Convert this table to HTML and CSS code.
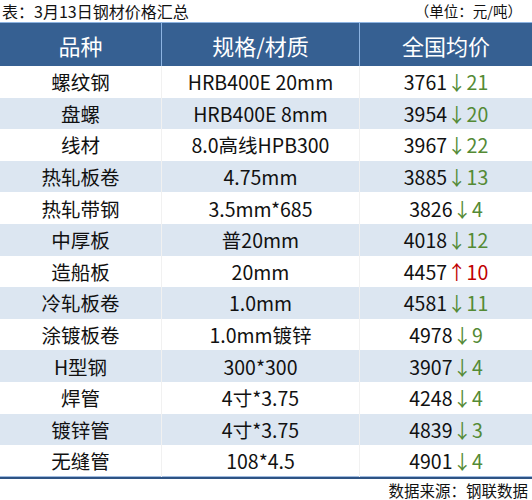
FILE: index.html
```html
<!DOCTYPE html>
<html lang="zh">
<head>
<meta charset="utf-8">
<link rel="stylesheet" href="styles.css">
</head>
<body>
<div class="page">
  <div class="top">
    <span class="title">表：3月13日钢材价格汇总</span>
    <span class="unit">（单位：元/吨）</span>
  </div>
  <div class="table">
    <div class="row head"><div class="c c1">品种</div><div class="c c2">规格/材质</div><div class="c c3">全国均价</div></div>
    <div class="row"><div class="c c1">螺纹钢</div><div class="c c2">HRB400E 20mm</div><div class="c c3">3761<span class="dn">↓21</span></div></div>
    <div class="row alt"><div class="c c1">盘螺</div><div class="c c2">HRB400E 8mm</div><div class="c c3">3954<span class="dn">↓20</span></div></div>
    <div class="row"><div class="c c1">线材</div><div class="c c2">8.0高线HPB300</div><div class="c c3">3967<span class="dn">↓22</span></div></div>
    <div class="row alt"><div class="c c1">热轧板卷</div><div class="c c2">4.75mm</div><div class="c c3">3885<span class="dn">↓13</span></div></div>
    <div class="row"><div class="c c1">热轧带钢</div><div class="c c2">3.5mm*685</div><div class="c c3">3826<span class="dn">↓4</span></div></div>
    <div class="row alt"><div class="c c1">中厚板</div><div class="c c2">普20mm</div><div class="c c3">4018<span class="dn">↓12</span></div></div>
    <div class="row"><div class="c c1">造船板</div><div class="c c2">20mm</div><div class="c c3">4457<span class="up">↑10</span></div></div>
    <div class="row alt"><div class="c c1">冷轧板卷</div><div class="c c2">1.0mm</div><div class="c c3">4581<span class="dn">↓11</span></div></div>
    <div class="row"><div class="c c1">涂镀板卷</div><div class="c c2">1.0mm镀锌</div><div class="c c3">4978<span class="dn">↓9</span></div></div>
    <div class="row alt"><div class="c c1">H型钢</div><div class="c c2">300*300</div><div class="c c3">3907<span class="dn">↓4</span></div></div>
    <div class="row"><div class="c c1">焊管</div><div class="c c2">4寸*3.75</div><div class="c c3">4248<span class="dn">↓4</span></div></div>
    <div class="row alt"><div class="c c1">镀锌管</div><div class="c c2">4寸*3.75</div><div class="c c3">4839<span class="dn">↓3</span></div></div>
    <div class="row last"><div class="c c1">无缝管</div><div class="c c2">108*4.5</div><div class="c c3">4901<span class="dn">↓4</span></div></div>
  </div>
  <div class="foot">数据来源：钢联数据</div>
</div>
</body>
</html>
```
FILE: styles.css
```css
html, body {
  margin: 0;
  padding: 0;
  background: #ffffff;
}
.page {
  width: 532px;
  height: 500px;
  font-family: "Noto Sans CJK SC", "Noto Sans", sans-serif;
  color: #111111;
  overflow: hidden;
}
.top {
  height: 22px;
  display: flex;
  justify-content: space-between;
  align-items: center;
  line-height: 22px;
  padding: 0 10px 0 2px;
}
.title {
  font-size: 16px;
}
.unit {
  font-size: 14.5px;
}
.table {
  display: flex;
  flex-direction: column;
}
.row {
  display: flex;
  height: 31.6px;
  background: #ffffff;
}
.row.alt {
  background: #dce6f1;
}
.row.head {
  height: 44px;
  background: #366092;
  color: #ffffff;
  border-top: 1px solid #8db4e2;
  box-sizing: border-box;
}
.row.last {
  border-bottom: 2px solid #2e5384;
  box-shadow: 0 -1px 0 #9fbbe0 inset;
}
.c {
  display: flex;
  align-items: center;
  justify-content: center;
  font-size: 19.5px;
  box-sizing: border-box;
}
.head .c {
  font-size: 22px;
}
.c1 { width: 162px; border-right: 1px solid #f1f1f1; }
.c2 { width: 198px; border-right: 1px solid #f1f1f1; }
.c3 { width: 172px; }
.head .c1, .head .c2 { border-right: 1px solid #8db4e2; }
.dn { color: #548a35; }
.up { color: #c00000; }
.foot {
  text-align: right;
  font-size: 15.5px;
  line-height: 20px;
  padding-right: 4px;
  padding-top: 1px;
}
```
